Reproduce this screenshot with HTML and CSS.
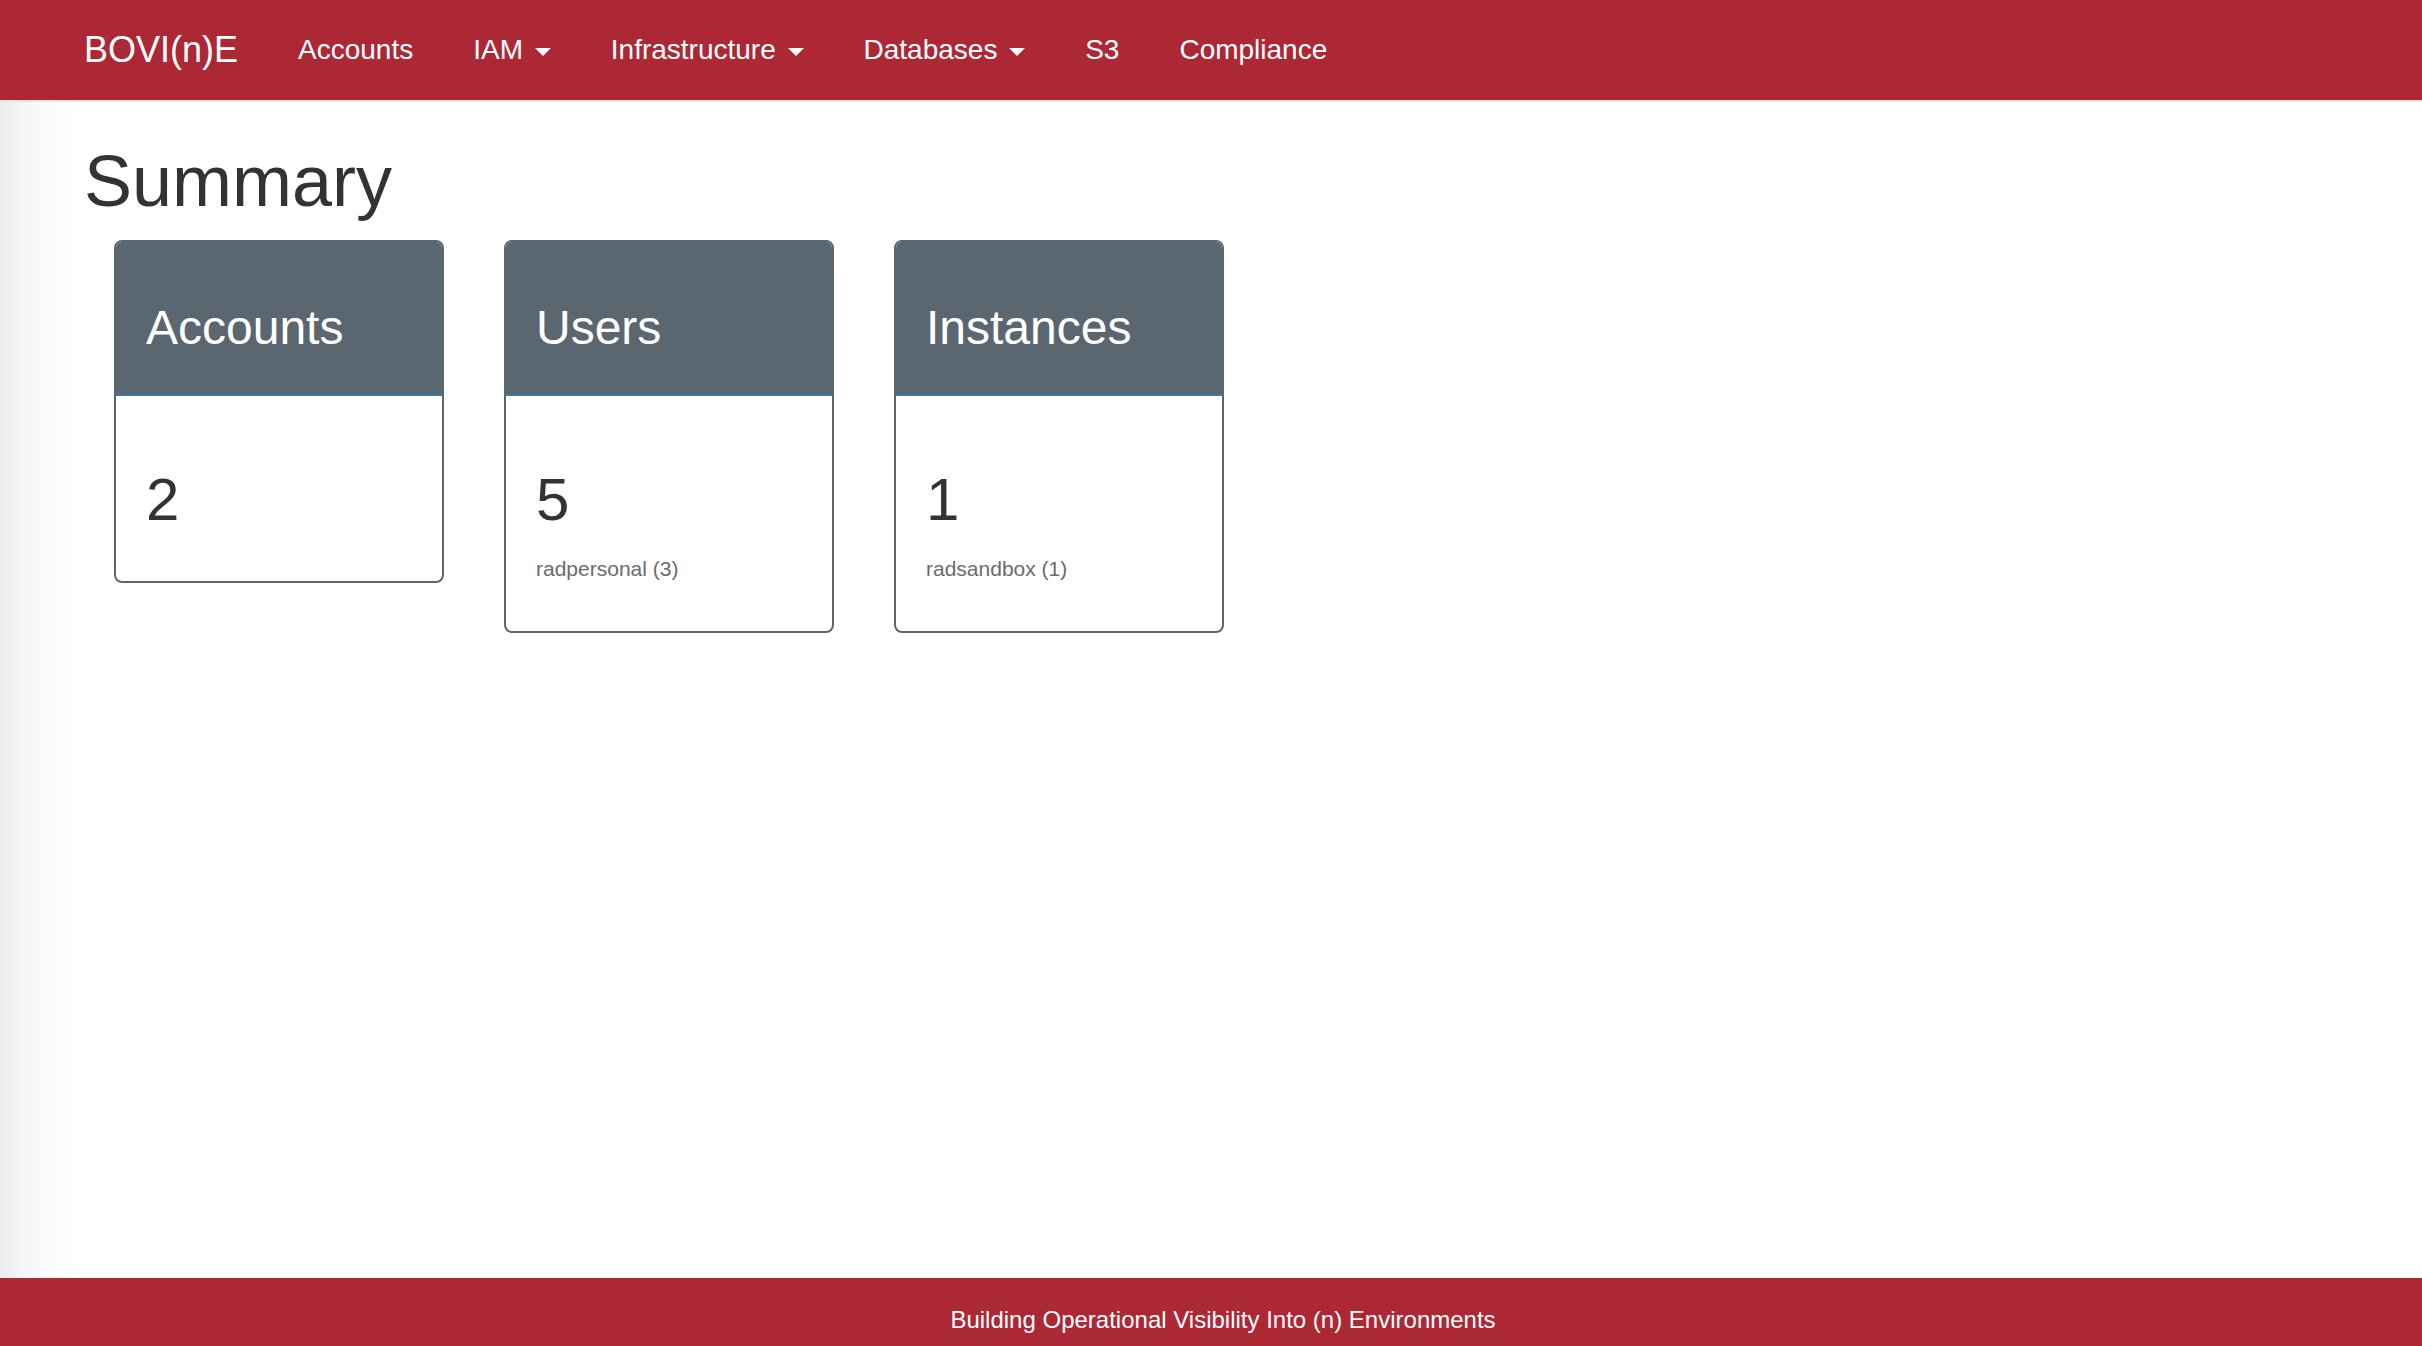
FILE: index.html
```html
<!DOCTYPE html>
<html lang="en">
<head>
<meta charset="utf-8">
<title>BOVI(n)E</title>
<link rel="stylesheet" href="styles.css">
</head>
<body>
  <nav class="navbar">
    <a class="brand" href="#">BOVI(n)E</a>
    <ul class="nav">
      <li><a href="#">Accounts</a></li>
      <li><a href="#">IAM <span class="caret"></span></a></li>
      <li><a href="#">Infrastructure <span class="caret"></span></a></li>
      <li><a href="#">Databases <span class="caret"></span></a></li>
      <li><a href="#">S3</a></li>
      <li><a href="#">Compliance</a></li>
    </ul>
  </nav>
  <main class="content">
    <h1 class="title">Summary</h1>
    <div class="cards">
      <div class="card">
        <div class="card-head"><h3>Accounts</h3></div>
        <div class="card-body"><h2>2</h2></div>
      </div>
      <div class="card">
        <div class="card-head"><h3>Users</h3></div>
        <div class="card-body"><h2>5</h2><p>radpersonal (3)</p></div>
      </div>
      <div class="card">
        <div class="card-head"><h3>Instances</h3></div>
        <div class="card-body"><h2>1</h2><p>radsandbox (1)</p></div>
      </div>
    </div>
  </main>
  <footer class="footer">Building Operational Visibility Into (n) Environments</footer>
</body>
</html>
```

FILE: styles.css
```css
html, body {
  height: 100%;
  margin: 0;
}

body {
  display: flex;
  flex-direction: column;
  font-family: "Liberation Sans", Arial, Helvetica, sans-serif;
  color: #333333;
  background: linear-gradient(to right, #ececec 0px, #f6f6f6 25px, #fcfcfc 55px, #ffffff 80px);
}

.navbar {
  flex-shrink: 0;
  height: 100px;
  display: flex;
  align-items: center;
  padding-left: 84px;
  background: #ad2835;
  border-bottom: 2px solid #e3e3e3;
}

.brand {
  font-size: 36px;
  line-height: 40px;
  color: #ffffff;
  text-decoration: none;
  padding-right: 30px;
}

.nav {
  display: flex;
  list-style: none;
  margin: 0;
  padding: 0;
}

.nav a {
  display: block;
  padding: 0 30px;
  font-size: 28px;
  line-height: 40px;
  color: #ffffff;
  text-decoration: none;
}

.caret {
  display: inline-block;
  width: 0;
  height: 0;
  margin-left: 4px;
  vertical-align: middle;
  border-top: 8px solid #ffffff;
  border-left: 8px solid transparent;
  border-right: 8px solid transparent;
}

.content {
  flex: 1;
  padding: 0 84px;
}

.title {
  margin: 39px 0 19px;
  font-size: 72px;
  line-height: 80px;
  font-weight: normal;
}

.cards {
  display: flex;
  align-items: flex-start;
  gap: 60px;
  margin-left: 30px;
}

.card {
  width: 330px;
  box-sizing: border-box;
  background: #ffffff;
  border: 2px solid #5b6770;
  border-radius: 8px;
  overflow: hidden;
}

.card-head {
  background: #5b6770;
  padding: 20px 30px;
  border-bottom: 2px solid #337ab7;
}

.card-head h3 {
  margin: 39px 0 20px;
  font-size: 48px;
  line-height: 53px;
  font-weight: normal;
  color: #ffffff;
}

.card-body {
  padding: 30px;
}

.card-body h2 {
  margin: 41px 0 18px;
  font-size: 60px;
  line-height: 66px;
  font-weight: normal;
  color: #333333;
}

.card-body p {
  margin: 0 0 14px;
  font-size: 21px;
  line-height: 36px;
  color: #6b6b6b;
}

.footer {
  flex-shrink: 0;
  height: 68px;
  box-sizing: border-box;
  padding: 28px 0 0 24px;
  background: #ad2835;
  color: #ffffff;
  text-align: center;
  font-size: 24px;
  line-height: 28px;
}
```
